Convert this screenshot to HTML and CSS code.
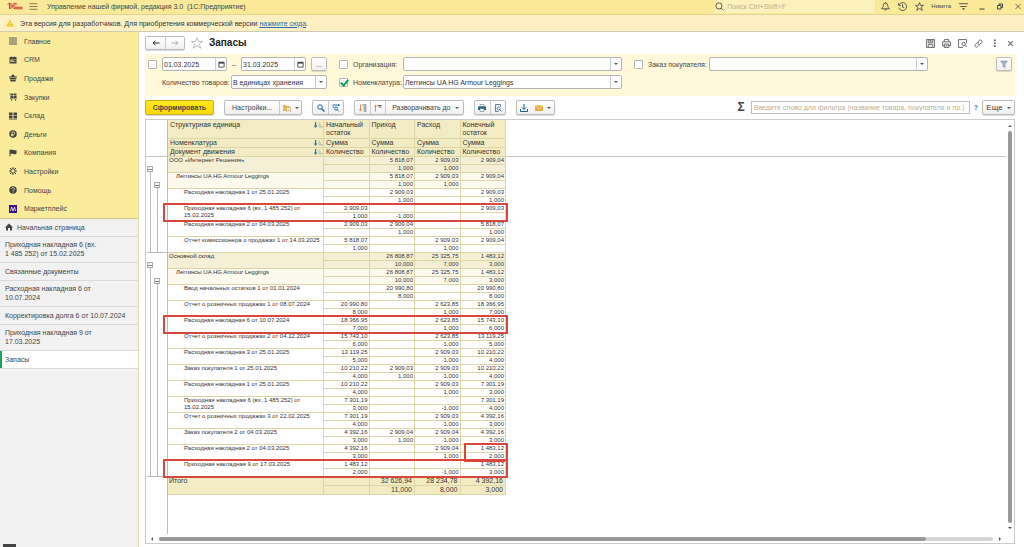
FILE: index.html
```html
<!DOCTYPE html>
<html lang="ru">
<head>
    <meta charset="UTF-8">
    <meta name="viewport" content="width=device-width, initial-scale=1.0">
    <title>Запасы</title>
    <link rel="stylesheet" href="styles.css">
</head>
<body>
    <!-- Title bar -->
    <header class="topbar">
        <svg class="logo" viewBox="0 0 32 16" fill="none" stroke="#d9343a" stroke-width="2"><path d="M1 5l4-3v12M8 2v12"/><path d="M21 5a5.500 5.500 0 1 0-5 8.500h15"/><path d="M18 7a2.500 2.500 0 1 0-2 3.500h15"/></svg>
        <button class="icon-btn menu-btn" aria-label="Меню"><svg viewBox="0 0 16 16" fill="none" stroke="#6b6647" stroke-width="1.5"><path d="M1 3h14M1 8h14M1 13h14"/></svg></button>
        <span class="app-title">Управление нашей фирмой, редакция 3.0&nbsp; (1С:Предприятие)</span>
        <label class="search">
            <svg viewBox="0 0 16 16" fill="none" stroke="#444" stroke-width="1.5"><circle cx="7" cy="7" r="5.500"/><path d="M11 11l4 4"/></svg>
            <input type="text" placeholder="Поиск Ctrl+Shift+F" aria-label="Поиск">
        </label>
        <div class="top-actions">
            <button class="icon-btn" aria-label="Уведомления"><svg viewBox="0 0 16 16" fill="none" stroke="#444" stroke-width="1.500"><path d="M1 12h14c-2-2-3-3-3-6a4 4 0 0 0-8 0c0 3-1 4-3 6zM6 13c1 2 3 2 4 0M8 2V0"/></svg></button>
            <button class="icon-btn" aria-label="История"><svg viewBox="0 0 16 16" fill="none" stroke="#444" stroke-width="1.500"><path d="M2 5a7 7 0 1 1-.5 5M1 2v4h4M8 4v5l3 1"/></svg></button>
            <button class="icon-btn" aria-label="Избранное"><svg viewBox="0 0 16 16" fill="none" stroke="#444" stroke-width="1.500"><path d="M8 1l2 5h5l-4 3.500 2 5.500-5-3.500L3 15l2-5.500L1 6h5z"/></svg></button>
            <a class="user" href="#">Никита</a>
            <button class="icon-btn" aria-label="Сервис"><svg viewBox="0 0 16 16" fill="none" stroke="#444" stroke-width="1.500"><path d="M0 3h16M2 8h12"/><path d="M5 11h6l-3 3z" fill="#444" stroke="none"/></svg></button>
            <button class="icon-btn window-btn" aria-label="Свернуть"><svg viewBox="0 0 16 16" stroke="#444" stroke-width="2"><path d="M3 13h10"/></svg></button>
            <button class="icon-btn window-btn" aria-label="Восстановить"><svg viewBox="0 0 16 16" fill="none" stroke="#444" stroke-width="2"><path d="M3 6h7v7H3zM6 6V3h7v7h-3"/></svg></button>
            <button class="icon-btn window-btn" aria-label="Закрыть"><svg viewBox="0 0 16 16" stroke="#444" stroke-width="1.500"><path d="M3 3l10 10M13 3L3 13"/></svg></button>
        </div>
    </header>
    <div class="banner">
        <svg viewBox="0 0 16 16"><path d="M8 1l7.500 14H.5z" fill="#f9c31c"/><path d="M8 6v5M8 12v2" stroke="#fff" stroke-width="1.500"/></svg>
        <span>Эта версия для разработчиков. Для приобретения коммерческой версии <a href="#">нажмите сюда</a>.</span>
    </div>

    <div class="layout">
        <!-- Sidebar -->
        <aside class="sidebar">
            <nav class="sections">
                <a href="#"><svg viewBox="0 0 16 16" stroke="#555" stroke-width="2"><path d="M0 2h16M0 6h16M0 10h16M0 14h16"/></svg>Главное</a>
                <a href="#"><svg viewBox="0 0 16 16"><path d="M1 2h3l1-2 1 2h4l1-2 1 2h3v13H1z" fill="#444"/><path d="M3 7h6v5H3zM10 7h3v1h-3zM10 10h3v1h-3z" fill="#f9eda0"/><path d="M5 8h2v3H5z" fill="#444"/></svg>CRM</a>
                <a href="#"><svg viewBox="0 0 16 16"><path d="M0 5h4l3-4h2l3 4h4v2H0zM1 8h14l-2 7H3z" fill="#444"/><path d="M1 11h14" stroke="#f9eda0"/></svg>Продажи</a>
                <a href="#"><svg viewBox="0 0 16 16"><path d="M0 1h3v10h13v1H2V2H0zM4 1h5v4H4zM10 1h5v4h-5zM4 6h5v4H4zM10 6h5v4h-5z" fill="#444"/><circle cx="5" cy="14" r="1.500" fill="#444"/><circle cx="13" cy="14" r="1.500" fill="#444"/></svg>Закупки</a>
                <a href="#"><svg viewBox="0 0 16 16" fill="#444"><path d="M0 1h7v6H0zM9 1h7v6H9zM0 8h7v5H0zM9 8h7v5H9zM0 14h16v1H0z"/></svg>Склад</a>
                <a href="#"><svg viewBox="0 0 16 16" fill="none"><circle cx="8" cy="8" r="7.500" fill="#444"/><path d="M6 13V4h3a2 2 0 0 1 0 5H4M4 11h5" stroke="#f9eda0" stroke-width="1.500"/></svg>Деньги</a>
                <a href="#"><svg viewBox="0 0 16 16" fill="#444"><path d="M1 1h2v14H1zM3 2c4-2 6 2 12 0v8c-6 2-8-2-12 0z"/></svg>Компания</a>
                <a href="#"><svg viewBox="0 0 16 16" fill="none" stroke="#444" stroke-width="2"><circle cx="8" cy="8" r="4.500"/><path d="M8 0v3M8 13v3M0 8h3M13 8h3M2 2l3 3M11 11l3 3M14 2l-3 3M5 11l-3 3"/></svg>Настройки</a>
                <a href="#"><svg viewBox="0 0 16 16" fill="none"><circle cx="8" cy="8" r="7.500" fill="#444"/><path d="M5 6c0-4 6-3 6 0 0 2-3 2-3 4M8 11v2" stroke="#f9eda0" stroke-width="1.500"/></svg>Помощь</a>
                <a href="#"><svg viewBox="0 0 16 16" fill="none"><path d="M0 0h16v16H0z" fill="#3b1480"/><path d="M3 12l2-8 3 8 3-8 2 8" stroke="#fff" stroke-width="1.500"/></svg>Маркетплейс</a>
            </nav>
            <nav class="windows">
                <a href="#"><svg viewBox="0 0 16 16" fill="#444"><path d="M8 1l8 8h-2v6h-4v-5H6v5H2V9H0z"/></svg>Начальная страница</a>
                <a href="#">Приходная накладная 6 (вх.<br>1 485 252) от 15.02.2025</a>
                <a href="#">Связанные документы</a>
                <a href="#">Расходная накладная 6 от<br>10.07.2024</a>
                <a href="#">Корректировка долга 6 от 10.07.2024</a>
                <a href="#">Приходная накладная 9 от<br>17.03.2025</a>
                <a href="#" class="active">Запасы</a>
            </nav>
            <button class="panel-toggle" aria-label="Панель"></button>
        </aside>

        <main class="content">
            <div class="page-head">
                <div class="btn-group nav-group">
                    <button aria-label="Назад"><svg viewBox="0 0 16 16" fill="none" stroke="#333" stroke-width="2"><path d="M2 8h13M7 4L2 8l5 4"/></svg></button>
                    <button aria-label="Вперед"><svg viewBox="0 0 16 16" fill="none" stroke="#999" stroke-width="1.500"><path d="M1 8h13M9 4l5 4-5 4"/></svg></button>
                </div>
                <button class="icon-btn star" aria-label="В избранное"><svg viewBox="0 0 16 16" fill="none" stroke="#aaa"><path d="M8 1l2 5h5.500L11 9.500l2 5.500-5-3.500L3 15l2-5.500L.5 6H6z"/></svg></button>
                <h1>Запасы</h1>
                <div class="page-actions">
                    <button class="icon-btn" aria-label="Сохранить"><svg viewBox="0 0 16 16" fill="none" stroke="#555" stroke-width="1.500"><path d="M1 1h14v14H1zM4 1v6h8V1M4 15v-5h8v5M6 3h4M6 5h4"/></svg></button>
                    <button class="icon-btn" aria-label="Печать"><svg viewBox="0 0 16 16" fill="none" stroke="#555" stroke-width="1.500"><path d="M4 5V1h8v4M4 12H1V5h14v7h-3M4 9h8v6H4zM6 12h4"/></svg></button>
                    <button class="icon-btn" aria-label="Просмотр"><svg viewBox="0 0 16 16" fill="none" stroke="#555" stroke-width="1.500"><path d="M15 8V1H1v14h8"/><circle cx="10" cy="9" r="3"/><path d="M12 11l4 4"/></svg></button>
                    <button class="icon-btn" aria-label="Ссылка"><svg viewBox="0 0 16 16" fill="none" stroke="#555" stroke-width="1.500"><path d="M7 5l3-3a3 3 0 0 1 4 4l-3 3a3 3 0 0 1-4 0M9 11l-3 3a3 3 0 0 1-4-4l3-3a3 3 0 0 1 4 0"/></svg></button>
                    <button class="icon-btn" aria-label="Ещё"><svg viewBox="0 0 16 16" fill="#555"><path d="M7 1h3v3H7zM7 6h3v3H7zM7 11h3v3H7z"/></svg></button>
                    <button class="icon-btn" aria-label="Закрыть вкладку"><svg viewBox="0 0 16 16" stroke="#777" stroke-width="2"><path d="M4 4l8 8M12 4l-8 8"/></svg></button>
                </div>
            </div>

            <!-- Filters -->
            <div class="filters">
                <div class="filter-col period">
                    <div class="filter-row">
                        <input type="checkbox" aria-label="Период">
                        <span class="field date"><input type="text" value="01.03.2025" aria-label="Начало периода"><button aria-label="Календарь"><svg viewBox="0 0 16 16" fill="none" stroke="#444" stroke-width="2"><path d="M2 3h12v11H2z"/><path d="M2 4h12" stroke-width="4"/></svg></button></span>
                        <span class="dash">–</span>
                        <span class="field date"><input type="text" value="31.03.2025" aria-label="Конец периода"><button aria-label="Календарь"><svg viewBox="0 0 16 16" fill="none" stroke="#444" stroke-width="2"><path d="M2 3h12v11H2z"/><path d="M2 4h12" stroke-width="4"/></svg></button></span>
                        <button class="btn dots">...</button>
                    </div>
                    <div class="filter-row units">
                        <label for="units">Количество товаров:</label>
                        <span class="field"><select id="units"><option>В единицах хранения</option></select><i class="arrow"></i></span>
                    </div>
                </div>
                <div class="filter-col wide">
                    <div class="filter-row">
                        <input type="checkbox" aria-label="Отбор по организации">
                        <label for="org">Организация:</label>
                        <span class="field"><select id="org"><option></option></select><i class="arrow"></i></span>
                    </div>
                    <div class="filter-row">
                        <input type="checkbox" checked aria-label="Отбор по номенклатуре">
                        <label for="item">Номенклатура:</label>
                        <span class="field"><select id="item"><option>Леггинсы UA HG Armour Leggings</option></select><i class="arrow"></i></span>
                    </div>
                </div>
                <div class="filter-col order">
                    <div class="filter-row">
                        <input type="checkbox" aria-label="Отбор по заказу">
                        <label for="order">Заказ покупателя:</label>
                        <span class="field"><select id="order"><option></option></select><i class="arrow"></i></span>
                    </div>
                </div>
                <button class="btn funnel" aria-label="Отборы"><svg viewBox="0 0 16 16"><path d="M1 2h14L10 8v7l-4-2V8z" fill="#a9b6c4" stroke="#77838f"/></svg></button>
            </div>

            <!-- Toolbar -->
            <div class="toolbar">
                <button class="btn primary">Сформировать</button>
                <div class="btn-group">
                    <button class="text settings">Настройки...</button>
                    <button class="with-arrow" aria-label="Варианты"><svg viewBox="0 0 16 16"><path d="M0 2h6l1 2h6v10H0z" fill="#e9b44c"/><path d="M7 7h8v9H7z" fill="#fff" stroke="#b98a35"/><path d="M9 10h4M9 13h4" stroke="#b98a35"/></svg><i class="arrow"></i></button>
                </div>
                <div class="btn-group">
                    <button aria-label="Найти"><svg viewBox="0 0 16 16" fill="none" stroke="#1d6ba5" stroke-width="2"><circle cx="6" cy="6" r="4.500"/><path d="M9 9l6 6" stroke-width="3"/></svg></button>
                    <button aria-label="Найти далее"><svg viewBox="0 0 16 16" fill="none" stroke="#1d6ba5" stroke-width="2"><path d="M1 2h12M12 0l3 2-3 2M1 6h3"/><circle cx="8" cy="9" r="3"/><path d="M10 11l4 4"/></svg></button>
                </div>
                <div class="btn-group">
                    <button aria-label="Развернуть"><svg viewBox="0 0 16 16" fill="none" stroke="#666" stroke-width="2"><path d="M3 1v13M1 11l2 3 2-3" stroke="#ee8354"/><path d="M7 2h8M9 6h6M9 10h6M9 14h6"/></svg></button>
                    <button aria-label="Свернуть группы"><svg viewBox="0 0 16 16" fill="none" stroke="#666" stroke-width="2"><path d="M3 15V2M1 5l2-3 2 3" stroke="#ee8354"/><path d="M7 3h8M9 6h6"/></svg></button>
                    <button class="text">Разворачивать до<i class="arrow"></i></button>
                </div>
                <div class="btn-group">
                    <button aria-label="Печать отчета"><svg viewBox="0 0 16 16"><path d="M4 1h8v4H4z" fill="#fff" stroke="#35617f"/><path d="M0 5h16v7H0z" fill="#35617f"/><path d="M4 9h8v6H4z" fill="#fff" stroke="#35617f"/></svg></button>
                    <button aria-label="Предварительный просмотр"><svg viewBox="0 0 16 16" fill="none" stroke="#35617f" stroke-width="1.500"><path d="M13 6V1H3v14h6"/><circle cx="9" cy="9" r="3"/><path d="M11 11l4 4" stroke-width="2"/></svg></button>
                </div>
                <div class="btn-group joined">
                    <button aria-label="Сохранить отчет"><svg viewBox="0 0 16 16" fill="none" stroke="#165d91" stroke-width="2"><path d="M8 0v10M4 7l4 4 4-4M1 10v5h14v-5"/></svg></button>
                    <button class="with-arrow" aria-label="Отправить"><svg viewBox="0 0 16 16"><path d="M0 3h16v11H0z" fill="#e8ad42"/><path d="M0 3l8 7 8-7" fill="none" stroke="#fff3d0"/></svg><i class="arrow"></i></button>
                </div>
                <div class="toolbar-right">
                    <button class="icon-btn sigma" aria-label="Сумма">Σ</button>
                    <input type="text" placeholder="Введите слово для фильтра (название товара, покупателя и пр.)" aria-label="Фильтр">
                    <a class="help" href="#">?</a>
                    <button class="btn more">Еще<i class="arrow"></i></button>
                </div>
            </div>

            <!-- Report -->
            <div class="report">
                <div class="sheet">
                    <div class="tree">
                        <div class="sheet-head"></div>
                        <div class="tree-group small">
                            <div class="branch"><button aria-label="Свернуть"></button></div>
                            <div class="branch inner"><button aria-label="Свернуть"></button></div>
                        </div>
                        <div class="tree-group big">
                            <div class="branch"><button aria-label="Свернуть"></button></div>
                            <div class="branch inner"><button aria-label="Свернуть"></button></div>
                        </div>
                    </div>
                    <table>
                        <colgroup><col class="name-col"><col class="num-col"><col class="num-col"><col class="num-col"><col class="num-col"></colgroup>
                        <thead>
                            <tr class="tall"><th>Структурная единица <svg viewBox="0 0 16 10"><path d="M3 0v6H1l3 4 3-4H5V0z" fill="#2677a8"/><path d="M9 2h2M9 5h4M9 8h7" stroke="#888"/></svg></th><th>Начальный остаток</th><th>Приход</th><th>Расход</th><th>Конечный остаток</th></tr>
                            <tr><th>Номенклатура <svg viewBox="0 0 16 10"><path d="M3 0v6H1l3 4 3-4H5V0z" fill="#2677a8"/><path d="M9 2h2M9 5h4M9 8h7" stroke="#888"/></svg></th><th>Сумма</th><th>Сумма</th><th>Сумма</th><th>Сумма</th></tr>
                            <tr><th>Документ движения <svg viewBox="0 0 16 10"><path d="M3 0v6H1l3 4 3-4H5V0z" fill="#2677a8"/><path d="M9 2h2M9 5h4M9 8h7" stroke="#888"/></svg></th><th>Количество</th><th>Количество</th><th>Количество</th><th>Количество</th></tr>
                        </thead>
                        <tbody class="level1">
                            <tr><td rowspan="2">ООО «Интернет Решения»</td><td></td><td>5 818,07</td><td>2 909,03</td><td>2 909,04</td></tr>
                            <tr><td></td><td>1,000</td><td>1,000</td><td></td></tr>
                        </tbody>
                        <tbody class="level2">
                            <tr><td rowspan="2">Леггинсы UA HG Armour Leggings</td><td></td><td>5 818,07</td><td>2 909,03</td><td>2 909,04</td></tr>
                            <tr><td></td><td>1,000</td><td>1,000</td><td></td></tr>
                        </tbody>
                        <tbody>
                            <tr><td rowspan="2">Расходная накладная 1 от 25.01.2025</td><td></td><td>2 909,03</td><td></td><td>2 909,03</td></tr>
                            <tr><td></td><td>1,000</td><td></td><td>1,000</td></tr>
                        </tbody>
                        <tbody class="marked">
                            <tr><td rowspan="2">Приходная накладная 6 (вх. 1 485 252) от<br>15.02.2025</td><td>2 909,03</td><td></td><td></td><td>2 909,03</td></tr>
                            <tr><td>1,000</td><td>-1,000</td><td></td><td></td></tr>
                        </tbody>
                        <tbody>
                            <tr><td rowspan="2">Расходная накладная 2 от 04.03.2025</td><td>2 909,03</td><td>2 909,04</td><td></td><td>5 818,07</td></tr>
                            <tr><td></td><td>1,000</td><td></td><td>1,000</td></tr>
                        </tbody>
                        <tbody>
                            <tr><td rowspan="2">Отчет комиссионера о продажах 1 от 14.03.2025</td><td>5 818,07</td><td></td><td>2 909,03</td><td>2 909,04</td></tr>
                            <tr><td>1,000</td><td></td><td>1,000</td><td></td></tr>
                        </tbody>
                        <tbody class="level1">
                            <tr><td rowspan="2">Основной склад</td><td></td><td>26 808,87</td><td>25 325,75</td><td>1 483,12</td></tr>
                            <tr><td></td><td>10,000</td><td>7,000</td><td>3,000</td></tr>
                        </tbody>
                        <tbody class="level2">
                            <tr><td rowspan="2">Леггинсы UA HG Armour Leggings</td><td></td><td>26 808,87</td><td>25 325,75</td><td>1 483,12</td></tr>
                            <tr><td></td><td>10,000</td><td>7,000</td><td>3,000</td></tr>
                        </tbody>
                        <tbody>
                            <tr><td rowspan="2">Ввод начальных остатков 1 от 01.01.2024</td><td></td><td>20 990,80</td><td></td><td>20 990,80</td></tr>
                            <tr><td></td><td>8,000</td><td></td><td>8,000</td></tr>
                        </tbody>
                        <tbody>
                            <tr><td rowspan="2">Отчет о розничных продажах 1 от 08.07.2024</td><td>20 990,80</td><td></td><td>2 623,85</td><td>18 366,95</td></tr>
                            <tr><td>8,000</td><td></td><td>1,000</td><td>7,000</td></tr>
                        </tbody>
                        <tbody class="marked">
                            <tr><td rowspan="2">Расходная накладная 6 от 10.07.2024</td><td>18 366,95</td><td></td><td>2 623,85</td><td>15 743,10</td></tr>
                            <tr><td>7,000</td><td></td><td>1,000</td><td>6,000</td></tr>
                        </tbody>
                        <tbody>
                            <tr><td rowspan="2">Отчет о розничных продажах 2 от 04.12.2024</td><td>15 743,10</td><td></td><td>2 623,85</td><td>13 119,25</td></tr>
                            <tr><td>6,000</td><td></td><td>1,000</td><td>5,000</td></tr>
                        </tbody>
                        <tbody>
                            <tr><td rowspan="2">Расходная накладная 3 от 25.01.2025</td><td>13 119,25</td><td></td><td>2 909,03</td><td>10 210,22</td></tr>
                            <tr><td>5,000</td><td></td><td>1,000</td><td>4,000</td></tr>
                        </tbody>
                        <tbody>
                            <tr><td rowspan="2">Заказ покупателя 1 от 25.01.2025</td><td>10 210,22</td><td>2 909,03</td><td>2 909,03</td><td>10 210,22</td></tr>
                            <tr><td>4,000</td><td>1,000</td><td>1,000</td><td>4,000</td></tr>
                        </tbody>
                        <tbody>
                            <tr><td rowspan="2">Расходная накладная 1 от 25.01.2025</td><td>10 210,22</td><td></td><td>2 909,03</td><td>7 301,19</td></tr>
                            <tr><td>4,000</td><td></td><td>1,000</td><td>3,000</td></tr>
                        </tbody>
                        <tbody>
                            <tr><td rowspan="2">Приходная накладная 6 (вх. 1 485 252) от<br>15.02.2025</td><td>7 301,19</td><td></td><td></td><td>7 301,19</td></tr>
                            <tr><td>3,000</td><td></td><td>-1,000</td><td>4,000</td></tr>
                        </tbody>
                        <tbody>
                            <tr><td rowspan="2">Отчет о розничных продажах 3 от 22.02.2025</td><td>7 301,19</td><td></td><td>2 909,03</td><td>4 392,16</td></tr>
                            <tr><td>4,000</td><td></td><td>1,000</td><td>3,000</td></tr>
                        </tbody>
                        <tbody>
                            <tr><td rowspan="2">Заказ покупателя 2 от 04.03.2025</td><td>4 392,16</td><td>2 909,04</td><td>2 909,04</td><td>4 392,16</td></tr>
                            <tr><td>3,000</td><td>1,000</td><td>1,000</td><td>3,000</td></tr>
                        </tbody>
                        <tbody class="marked last-cell">
                            <tr><td rowspan="2">Расходная накладная 2 от 04.03.2025</td><td>4 392,16</td><td></td><td>2 909,04</td><td>1 483,12</td></tr>
                            <tr><td>3,000</td><td></td><td>1,000</td><td>2,000</td></tr>
                        </tbody>
                        <tbody class="marked">
                            <tr><td rowspan="2">Приходная накладная 9 от 17.03.2025</td><td>1 483,12</td><td></td><td></td><td>1 483,12</td></tr>
                            <tr><td>2,000</td><td></td><td>-1,000</td><td>3,000</td></tr>
                        </tbody>
                        <tfoot>
                            <tr><td rowspan="2">Итого</td><td></td><td>32 626,94</td><td>28 234,78</td><td>4 392,16</td></tr>
                            <tr><td></td><td>11,000</td><td>8,000</td><td>3,000</td></tr>
                        </tfoot>
                    </table>
                    <div class="sheet-rest"><div class="sheet-head"></div></div>
                    <div class="vscroll"><i class="arrow up"></i><span class="thumb"></span><i class="arrow"></i></div>
                </div>
                <div class="hscroll"><i class="arrow left"></i><span class="track"><span class="thumb"></span></span><i class="arrow right"></i></div>
            </div>
        </main>
    </div>
</body>
</html>
```
FILE: styles.css
```css
/* Base */
* {
    box-sizing: border-box;
}
body {
    margin: 0;
    height: 100vh;
    display: flex;
    flex-direction: column;
    overflow: hidden;
    font: 7px/9px "Liberation Sans", Arial, sans-serif;
    color: #444;
    background: #fff;
}
button, input, select {
    font: inherit;
    color: inherit;
    margin: 0;
    padding: 0;
}
a {
    color: inherit;
    text-decoration: none;
}
svg {
    display: block;
    width: 8px;
    height: 8px;
    flex: none;
}
.icon-btn {
    display: flex;
    border: 0;
    background: none;
}
.icon-btn svg {
    width: 9px;
    height: 9px;
}
.arrow {
    flex: none;
    border: 2px solid transparent;
    border-top-color: #555;
    border-bottom: 0;
}

/* Title bar */
.topbar {
    display: flex;
    align-items: center;
    height: 15px;
    flex: none;
    padding: 0 2px 2px 7px;
    background: #fae998;
    border-bottom: 1px solid #e2d593;
}
.topbar .logo {
    width: 16px;
}
.menu-btn {
    margin: 0 9px 0 6px;
}
.app-title {
    flex: 1;
}
.search {
    display: flex;
    align-items: center;
    gap: 3px;
    width: 160px;
    height: 13px;
    background: #fdf2bb;
}
.search input {
    flex: 1;
    min-width: 0;
    border: 0;
    background: none;
}
.search svg {
    width: 9px;
    height: 9px;
}
input::placeholder {
    color: #b5b09a;
    opacity: 1;
}
.top-actions {
    display: flex;
    align-items: center;
    gap: 8px;
    padding-left: 6px;
}
.top-actions .user {
    font-size: 6px;
}
.top-actions .icon-btn + .user {
    margin-left: -1px;
}
.window-btn svg {
    width: 8px;
}
.window-btn {
    padding-left: 2px;
}
.banner {
    display: flex;
    align-items: center;
    gap: 6px;
    flex: none;
    height: 17px;
    padding: 0 6px;
    background: #fff0c4;
    border-bottom: 1px solid #d0cbb5;
    color: #333;
}
.banner a {
    color: #2b6cab;
    text-decoration: underline;
}

/* Sidebar */
.layout {
    display: flex;
    flex: 1;
    min-height: 0;
}
.sidebar {
    display: flex;
    flex-direction: column;
    width: 139px;
    flex: none;
    background: #f1f1f1;
    border-right: 1px solid #e8dfb4;
}
.sections {
    display: grid;
    grid-auto-rows: 1fr;
    height: 187px;
    background: #faec9c;
    border-bottom: 1px solid #cfc68d;
}
.sections a {
    display: flex;
    align-items: center;
    gap: 7px;
    padding-left: 9px;
}
.windows a {
    display: flex;
    align-items: center;
    gap: 4px;
    min-height: 18px;
    padding: 3px 5px 4px;
    border-bottom: 1px solid #d9d9d9;
}
.windows .active {
    background: #fff;
    box-shadow: inset 2px 0 #1fa05e;
}
.panel-toggle {
    width: 13px;
    height: 3px;
    margin: auto 0 0 3px;
    border: 0;
    background: #444;
}

/* Page header */
.content {
    display: flex;
    flex-direction: column;
    flex: 1;
    min-width: 0;
    padding: 0 9px 3px 6px;
}
.page-head {
    display: flex;
    align-items: center;
    flex: none;
    height: 22px;
}
.btn, .btn-group {
    height: 15px;
    border: 1px solid #bbb;
    border-radius: 2px;
    background: linear-gradient(#fff, #f0f0f0);
    box-shadow: 0 1px 1px rgba(0,0,0,0.15);
}
.btn-group {
    display: flex;
}
.btn-group button {
    display: flex;
    align-items: center;
    justify-content: center;
    width: 15px;
    border: 0;
    border-left: 1px solid #ccc;
    background: none;
}
.btn-group button:first-child, .joined button {
    border-left: 0;
}
.btn-group .text {
    width: auto;
    gap: 4px;
    padding: 0 4px 0 6px;
}
.btn-group .settings {
    padding: 0 7px;
}
.btn-group .with-arrow {
    width: 22px;
    gap: 4px;
}
.page-head .btn-group {
    height: 14px;
}
.page-head .nav-group button {
    width: 19px;
}
.star {
    margin: 0 6px;
}
.star svg {
    width: 12px;
    height: 12px;
}
h1 {
    margin: 0;
    font-size: 10px;
    line-height: 12px;
    color: #222;
}
.page-actions {
    display: flex;
    gap: 7px;
    margin-left: auto;
}

/* Filters */
.filters {
    display: flex;
    align-items: flex-start;
    gap: 12px;
    flex: none;
    height: 42px;
    padding: 3px;
    background: #fff9d9;
}
.filter-col {
    display: flex;
    flex-direction: column;
    gap: 4px;
}
.period {
    width: 179px;
}
.wide {
    width: 283px;
}
.order {
    width: 294px;
}
.filter-row {
    display: flex;
    align-items: center;
}
.units {
    padding-left: 14px;
}
.units label {
    width: 69px;
}
.wide label {
    width: 50px;
}
.order label {
    width: 61px;
}
input[type="checkbox"] {
    appearance: none;
    flex: none;
    width: 9px;
    height: 9px;
    margin-right: 5px;
    border: 1px solid #b5b5b5;
    border-radius: 1px;
    background: #fff;
}
input[type="checkbox"]:checked::before {
    content: "";
    display: block;
    width: 3px;
    height: 6px;
    margin: -1px 2px;
    border: solid #149a52;
    border-width: 0 2px 2px 0;
    transform: rotate(40deg);
}
.field {
    display: flex;
    align-items: center;
    flex: 1;
    min-width: 0;
    height: 14px;
    border: 1px solid #b5b5b5;
    border-radius: 2px;
    background: #fff;
}
.field input, .field select {
    flex: 1;
    width: 100%;
    min-width: 0;
    height: 12px;
    padding: 0 1px;
    border: 0;
    background: none;
    appearance: none;
    color: #333;
}
.field .arrow {
    margin: 0 3px;
}
.field select {
    border-right: 1px solid #ccc;
}
.date button {
    display: flex;
    align-items: center;
    flex: none;
    width: 11px;
    height: 12px;
    padding-left: 2px;
    border: 0;
    border-left: 1px solid #ccc;
    background: none;
}
.date svg {
    width: 7px;
    height: 7px;
}
.dash {
    width: 14px;
    text-align: center;
}
.dots {
    flex: none;
    width: 16px;
    height: 14px;
    margin-left: 5px;
}
.funnel {
    display: flex;
    align-items: center;
    justify-content: center;
    width: 16px;
    height: 14px;
    margin-left: auto;
}

/* Toolbar */
.toolbar {
    display: flex;
    align-items: center;
    gap: 10px;
    flex: none;
    height: 23px;
}
.primary {
    width: 69px;
    border-color: #c9ae1a;
    background: linear-gradient(#ffe81f, #f7d800);
    font-weight: bold;
}
.toolbar-right {
    display: flex;
    align-items: center;
    margin-left: auto;
}
.sigma {
    font-size: 12px;
    font-weight: bold;
    margin-right: 6px;
}
.toolbar-right input {
    width: 219px;
    height: 13px;
    padding: 0 2px;
    border: 1px solid #bbb;
}
.help {
    margin: 0 4px;
    color: #1f7fc0;
    font-weight: bold;
}
.more {
    display: flex;
    align-items: center;
    justify-content: center;
    gap: 4px;
    width: 33px;
    font-size: 8px;
}

/* Report */
.report {
    display: flex;
    flex-direction: column;
    flex: 1;
    min-height: 0;
    border: 1px solid #ccc;
}
.sheet {
    display: flex;
    flex: 1;
    min-height: 0;
}
.sheet-head {
    height: 37px;
    border-bottom: 1px solid #c4c4c4;
}
.tree {
    width: 22px;
    flex: none;
    border-right: 1px solid #bbb;
}
.tree-group {
    display: flex;
    padding-left: 1px;
}
.small {
    height: 96px;
}
.big {
    height: 224px;
}
.branch {
    display: flex;
    flex-direction: column;
    width: 7px;
    padding-top: 9px;
    border-bottom: 1px solid #bbb;
}
.branch.inner {
    width: 13px;
    padding-top: 25px;
}
.branch button {
    flex: none;
    width: 6px;
    height: 6px;
    border: 1px solid #aaa;
    background: linear-gradient(#888, #888) center / 4px 1px no-repeat #fff;
}
.branch::after {
    content: "";
    flex: 1;
    margin-left: 3px;
    border-left: 1px solid #bbb;
}
table {
    table-layout: fixed;
    width: 338px;
    align-self: flex-start;
    border-spacing: 0;
    font-size: 6px;
    line-height: 7px;
    color: #333;
}
.name-col {
    width: 156px;
}
th, td {
    height: 8px;
    padding: 0 1px;
    border: solid #ded5a6;
    border-width: 0 1px 1px 0;
    text-align: right;
    vertical-align: top;
}
th {
    height: 9px;
    padding: 0 2px;
    background: #f3ebc4;
    font-size: 7px;
    font-weight: normal;
    line-height: 8px;
    text-align: left;
}
.tall th {
    height: 19px;
    padding-top: 1px;
}
th svg {
    float: right;
    width: 10px;
    height: 6px;
    margin: 1px -2px 0 0;
}
td[rowspan] {
    padding: 0 1px 0 16px;
    text-align: left;
}
.level1 {
    background: #f5efd5;
}
.level2 {
    background: #fcfaec;
}
.level1 td[rowspan] {
    padding-left: 1px;
}
.level2 td[rowspan] {
    padding-left: 8px;
}
tfoot {
    background: #f3ebc4;
    font-size: 7px;
    line-height: 8px;
}
tfoot td {
    height: 9px;
    padding-right: 2px;
}
tfoot td[rowspan] {
    padding-left: 1px;
}
/* Red frames over the highlighted rows */
.marked {
    position: relative;
}
.marked::after {
    content: "";
    position: absolute;
    inset: -2px -2px -1px -5px;
    border: 2px solid #d8473d;
}
.last-cell::after {
    left: 296px;
}
.sheet-rest {
    flex: 1;
}
.vscroll {
    display: flex;
    flex-direction: column;
    align-items: center;
    gap: 4px;
    width: 8px;
    padding: 5px 0;
}
.thumb {
    flex: 1;
    width: 4px;
    border-radius: 2px;
    background: #999;
}
.hscroll {
    display: flex;
    align-items: center;
    gap: 5px;
    height: 9px;
    padding: 0 12px 0 4px;
}
.track {
    flex: 1;
    display: flex;
    height: 4px;
    border-radius: 2px;
    background: #d5d5d5;
}
.track .thumb {
    flex: none;
    width: 92%;
}
.up {
    transform: rotate(180deg);
}
.left {
    transform: rotate(90deg);
}
.right {
    transform: rotate(-90deg);
}
```
